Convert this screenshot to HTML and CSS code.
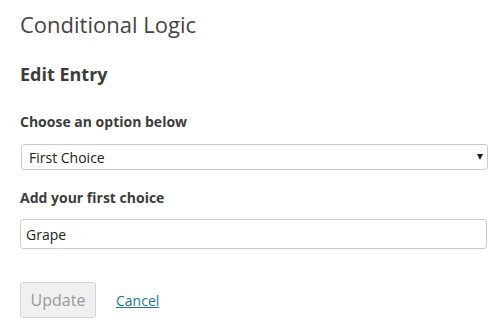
FILE: index.html
```html
<!DOCTYPE html>
<html lang="en">
<head>
  <meta charset="UTF-8" />
  <title>Conditional Logic</title>
  <link rel="stylesheet" href="styles.css">
</head>
<body>
  <div class="page">
    <h1>Conditional Logic</h1>
    <h2>Edit Entry</h2>
    <form class="entry-form">
      <div class="field">
        <label for="choice">Choose an option below</label>
        <div class="select-wrap">
          <select id="choice" name="choice">
            <option>First Choice</option>
            <option>Second Choice</option>
          </select>
        </div>
      </div>
      <div class="field">
        <label for="first">Add your first choice</label>
        <input type="text" id="first" name="first" value="Grape">
      </div>
      <div class="actions">
        <button type="submit" disabled>Update</button>
        <a href="#" class="cancel">Cancel</a>
      </div>
    </form>
  </div>
</body>
</html>
```

FILE: styles.css
```css
body {
  margin: 0;
  font-family: "Open Sans", sans-serif;
  color: #333;
  background: #fff;
}
.page {
  padding: 8px 12px 0 20px;
}
h1 {
  font-size: 22px;
  font-weight: 400;
  color: #444;
  margin: 0 0 22px;
  line-height: 32px;
}
h2 {
  font-size: 18px;
  font-weight: 700;
  color: #3c3c3c;
  margin: 0 0 26px;
  line-height: 24px;
}
.field {
  margin-bottom: 18px;
}
label {
  display: block;
  font-size: 14px;
  font-weight: 700;
  color: #3c3c3c;
  line-height: 20px;
  margin-bottom: 12px;
}
.field + .field label {
  margin-bottom: 11px;
}
.select-wrap {
  position: relative;
  margin-left: 1px;
  width: 467px;
}
.select-wrap::after {
  content: "";
  position: absolute;
  right: 5px;
  top: 10px;
  border-left: 3px solid transparent;
  border-right: 3px solid transparent;
  border-top: 6px solid #222;
  pointer-events: none;
}
select {
  -webkit-appearance: none;
  appearance: none;
  width: 100%;
  height: 26px;
  border: 1px solid #ccc;
  border-radius: 3px;
  background: #fff;
  font-family: inherit;
  font-size: 14px;
  color: #222;
  padding: 0 7px;
}
input[type="text"] {
  box-sizing: border-box;
  width: 467px;
  height: 30px;
  border: 1px solid #ccc;
  border-radius: 3px;
  font-family: inherit;
  font-size: 14px;
  color: #222;
  padding: 0 5px;
}
.actions {
  display: flex;
  align-items: center;
  gap: 20px;
  margin-top: 33px;
}
button {
  height: 36px;
  width: 76px;
  border: 1px solid #d5d5d5;
  border-radius: 3px;
  background: #f0f0f0;
  color: #999;
  font-family: inherit;
  font-size: 16px;
  padding: 0;
}
.cancel {
  font-size: 14px;
  color: #21759b;
}
```
